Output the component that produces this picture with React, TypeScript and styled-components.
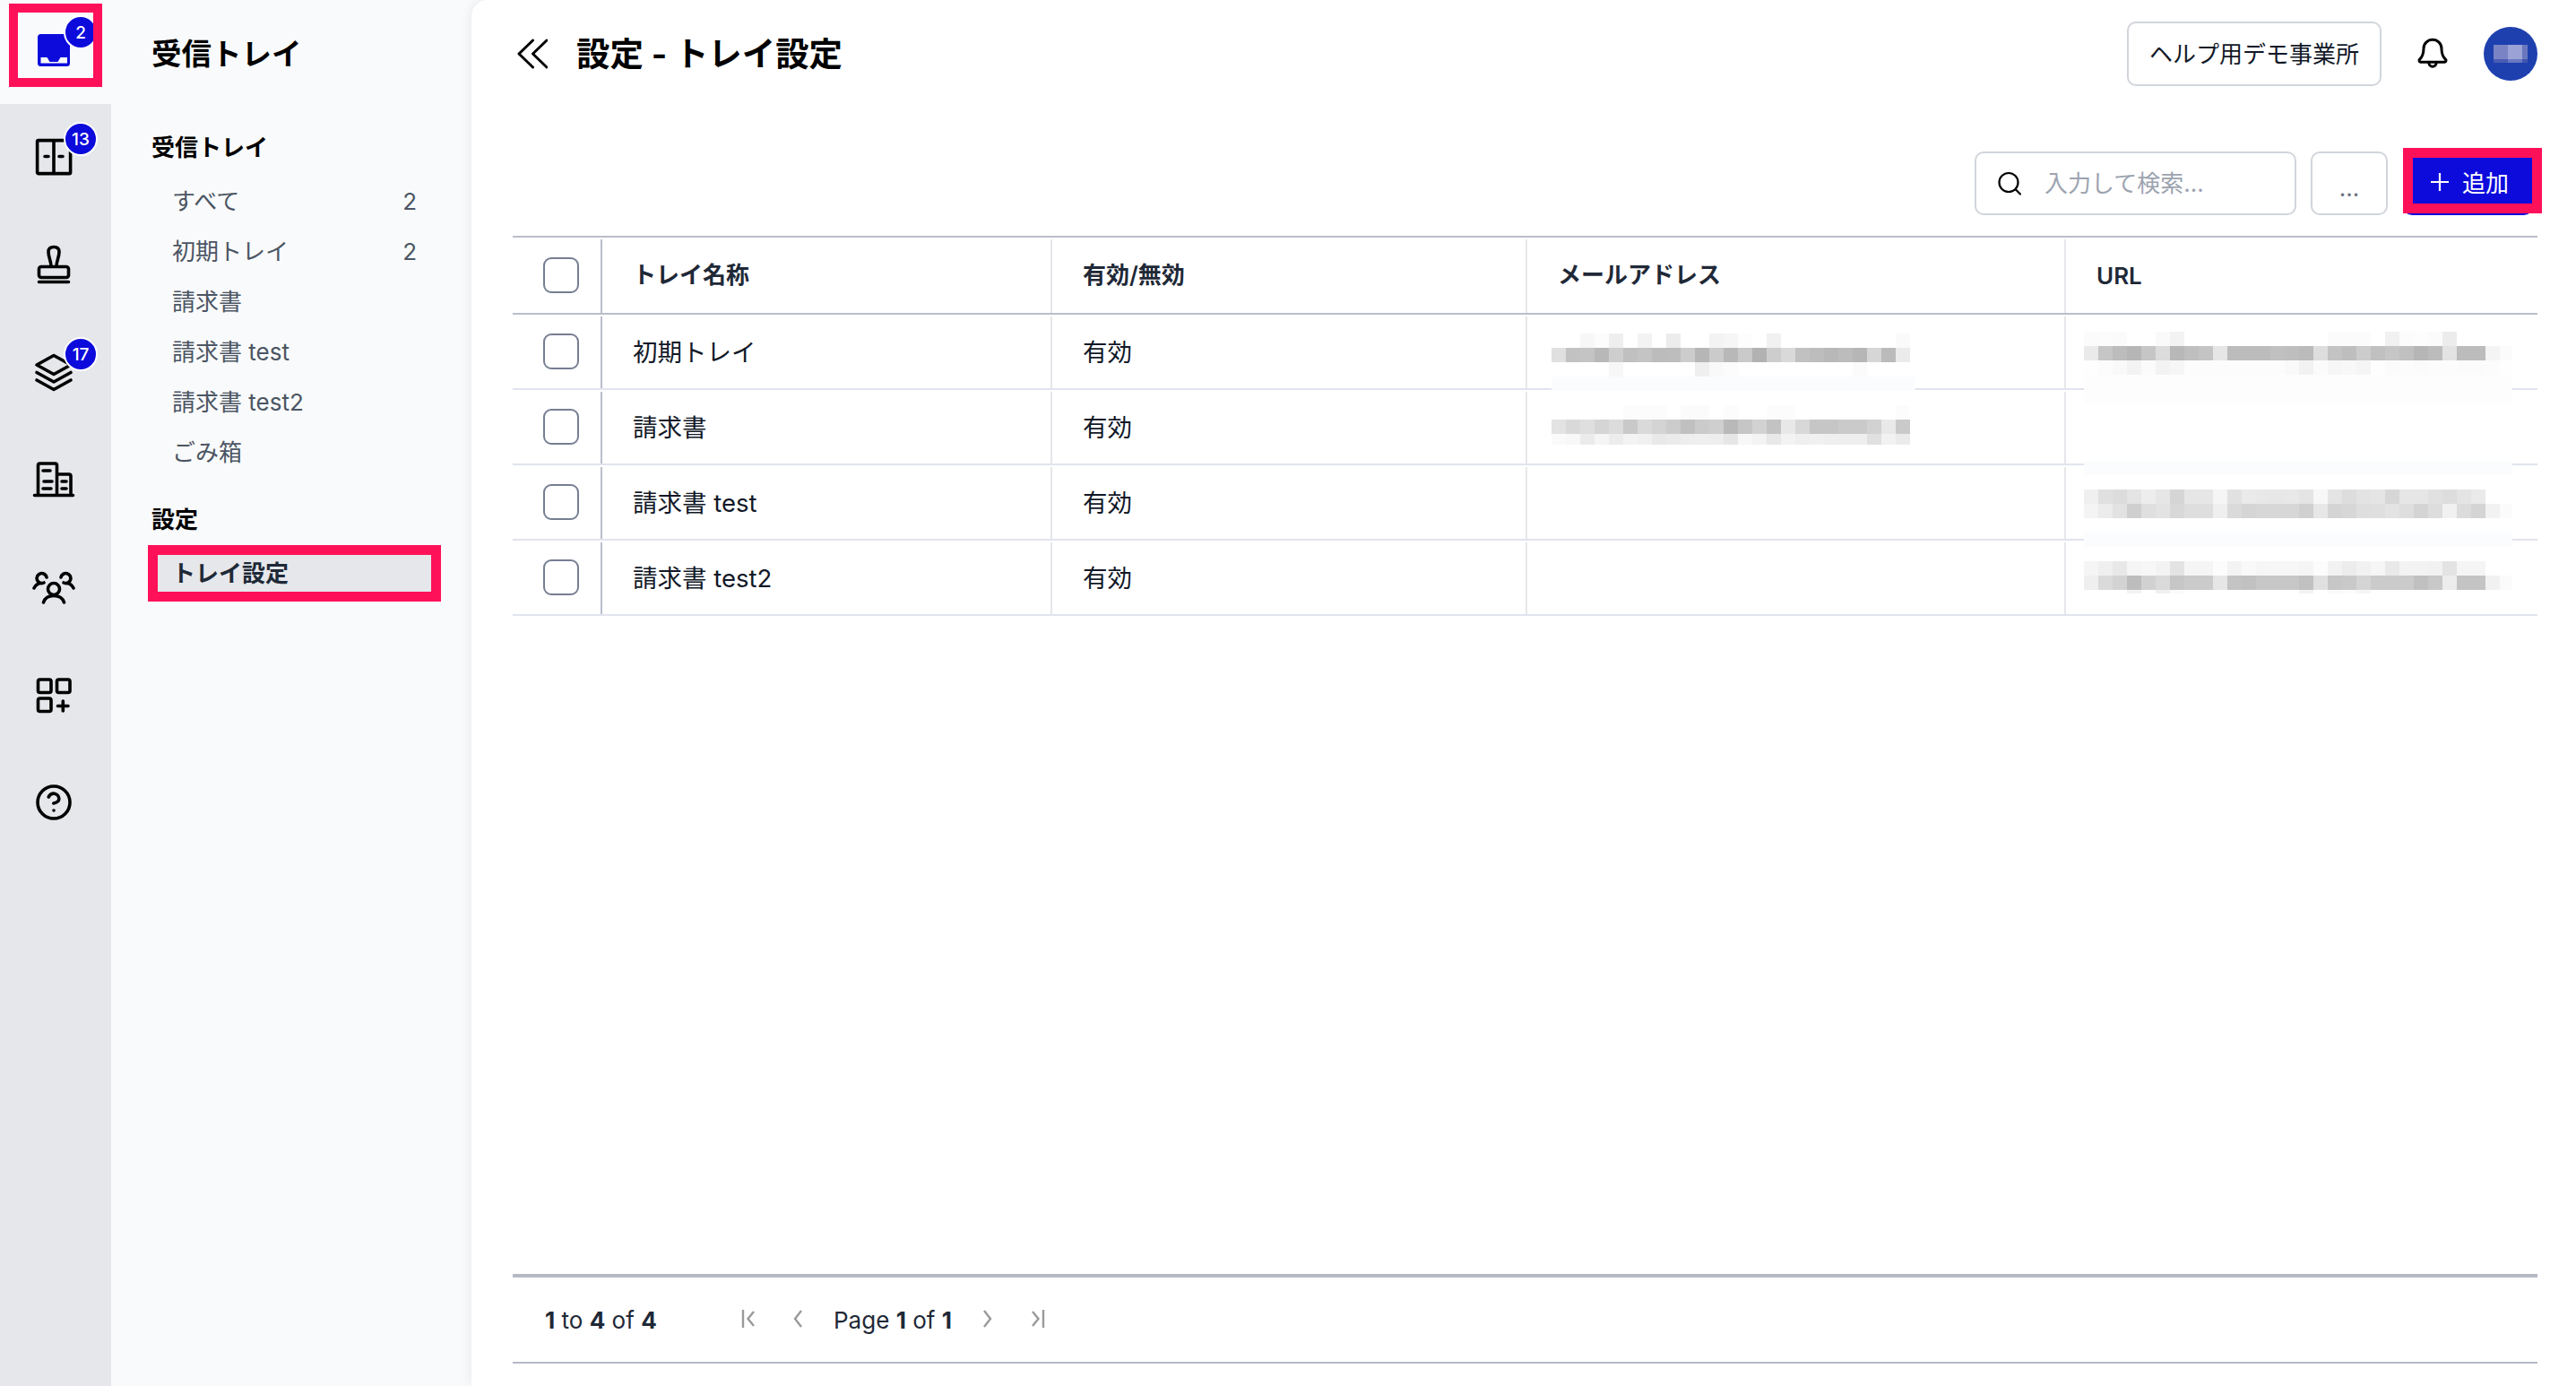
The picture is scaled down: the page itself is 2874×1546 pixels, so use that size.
import React from "react";
import styled, { createGlobalStyle } from "styled-components";

const FONT = `Inter, "Noto Sans CJK JP", sans-serif`;

const Global = createGlobalStyle`
  html, body { margin: 0; height: 100%; overflow: hidden; background: #fff; }
  #root { height: 100%; }
  *, *::before, *::after { box-sizing: border-box; }
  body { font-family: ${FONT}; color: #111827; }
`;

const Shell = styled.div`
  display: flex;
  height: 100vh;
  background: #f9fafb;
`;

/* ---------- Rail ---------- */
const Rail = styled.nav`
  width: 124px;
  flex: none;
  background: #e5e7eb;
  display: flex;
  flex-direction: column;
`;
const RailItem = styled.div<{ $active?: boolean }>`
  position: relative;
  height: ${(p) => (p.$active ? "116px" : "120px")};
  padding: ${(p) => (p.$active ? "0 4px 4px 0" : "0 4px 0 0")};
  margin-bottom: ${(p) => (p.$active ? "-1px" : "0")};
  display: flex;
  align-items: center;
  justify-content: center;
  background: ${(p) => (p.$active ? "#f9fafb" : "transparent")};
  ${(p) =>
    p.$active
      ? `&::after {
    content: "";
    position: absolute;
    left: 10px;
    top: 4px;
    width: 104px;
    height: 93px;
    border: 10.5px solid #ff1159;
  }`
      : ""}
`;
const RailIcon = styled.div`
  position: relative;
  width: 48px;
  height: 48px;
  color: #000;
  svg { display: block; }
`;
const Badge = styled.span`
  position: absolute;
  left: 35px;
  top: -15px;
  width: 38px;
  height: 38px;
  border-radius: 50%;
  border: 2px solid #fff;
  background: #0d0bdc;
  color: #fff;
  font-size: 19px;
  font-weight: 500;
  display: flex;
  align-items: center;
  justify-content: center;
`;

const Glyph = styled.svg.attrs({
  viewBox: "0 0 48 48",
  width: 48,
  height: 48,
  fill: "none",
  stroke: "currentColor",
  strokeWidth: 3.6,
  strokeLinecap: "round",
  strokeLinejoin: "round",
})``;

/* ---------- Sidebar ---------- */
const Sidebar = styled.aside`
  width: 402px;
  flex: none;
  padding-left: 45px;
  display: flex;
  flex-direction: column;
`;
const SideTitle = styled.h2`
  margin: 0;
  height: 116px;
  padding-bottom: 2px;
  display: flex;
  align-items: center;
  font-size: 33.5px;
  font-weight: 700;
  color: #000;
`;
const SideHeading = styled.h3<{ $gap: number }>`
  margin: ${(p) => p.$gap}px 0 0;
  height: 40px;
  padding-bottom: 4px;
  display: flex;
  align-items: center;
  font-size: 26px;
  font-weight: 700;
  color: #000;
`;
const NavList = styled.div<{ $gap: number }>`
  margin: ${(p) => p.$gap}px 0 0 7px;
  width: 305px;
`;
const NavItem = styled.div<{ $active?: boolean }>`
  height: ${(p) => (p.$active ? "41px" : "56px")};
  padding: 0 16px 0 16px;
  display: flex;
  align-items: center;
  justify-content: space-between;
  font-size: 26px;
  font-weight: ${(p) => (p.$active ? 700 : 400)};
  color: ${(p) => (p.$active ? "#1f2937" : "#4b5563")};
  background: ${(p) => (p.$active ? "#e5e7eb" : "transparent")};
  outline: ${(p) => (p.$active ? "11px solid #ff1159" : "none")};
  > span:first-child { margin-bottom: 4px; }
`;

/* ---------- Main ---------- */
const Main = styled.main`
  flex: 1;
  min-width: 0;
  background: #fff;
  border-top-left-radius: 18px;
  box-shadow: 0 0 14px rgba(17, 24, 39, 0.08);
  padding: 0 43px 25px 46px;
  display: flex;
  flex-direction: column;
`;
const Header = styled.header`
  height: 120px;
  flex: none;
  display: flex;
  align-items: center;
`;
const Collapse = styled.svg.attrs({
  viewBox: "0 0 34 34",
  width: 34,
  height: 34,
  fill: "none",
  stroke: "#000",
  strokeWidth: 3,
  strokeLinecap: "round",
  strokeLinejoin: "round",
})`
  flex: none;
  margin-left: 5px;
`;
const PageTitle = styled.h1`
  margin: 0 0 4px 32px;
  font-size: 37.4px;
  font-weight: 700;
  color: #000;
`;
const HeaderRight = styled.div`
  margin-left: auto;
  display: flex;
  align-items: center;
  gap: 37px;
`;
const OutlineBtn = styled.button`
  height: 72px;
  padding: 0 23px 4px;
  background: #fff;
  border: 2px solid #d1d5db;
  border-radius: 10px;
  font: 400 26px ${FONT};
  color: #111827;
  white-space: nowrap;
`;
const Avatar = styled.div`
  width: 60px;
  height: 60px;
  border-radius: 50%;
  background: #1e40af;
  display: flex;
  align-items: center;
  justify-content: center;
`;

const Toolbar = styled.div`
  flex: none;
  margin-top: 49px;
  height: 71px;
  padding-right: 5px;
  display: flex;
  justify-content: flex-end;
  gap: 16px;
`;
const SearchBox = styled.div`
  width: 359px;
  display: flex;
  align-items: center;
  padding-left: 23px;
  gap: 25px;
  border: 2px solid #d1d5db;
  border-radius: 10px;
  background: #fff;
  font-size: 26px;
  color: #9ca3af;
  > span { margin-bottom: 4px; }
`;
const MoreBtn = styled.button`
  width: 86px;
  background: #fff;
  border: 2px solid #d1d5db;
  border-radius: 10px;
  font: 400 26px ${FONT};
  color: #6b7280;
  padding-top: 10px;
`;
const AddBtn = styled.button`
  position: relative;
  width: 145px;
  margin-left: 1px;
  border: none;
  border-radius: 10px;
  background: #0d0bdc;
  color: #fff;
  font: 400 26px ${FONT};
  display: flex;
  align-items: center;
  justify-content: center;
  gap: 15px;
  padding: 0 0 4px 4px;
  &::after {
    content: "";
    position: absolute;
    left: 0;
    top: -4px;
    right: -10px;
    bottom: 2px;
    border: 11px solid #ff1159;
  }
`;

/* ---------- Table ---------- */
const Table = styled.div`
  flex: none;
  margin-top: 23px;
  border-top: 2.5px solid #bbbdcb;
`;
const Row = styled.div<{ $head?: boolean }>`
  display: grid;
  grid-template-columns: 98px 502px 530px 601px 1fr;
  height: ${(p) => (p.$head ? "85.5px" : "84px")};
  border-bottom: ${(p) => (p.$head ? "2.5px solid #bbbdcb" : "2px solid #e1e4ee")};
`;
const CheckCell = styled.div`
  padding-left: 34px;
  display: flex;
  align-items: center;
`;
const Check = styled.span`
  width: 40px;
  height: 40px;
  border: 2.5px solid #767e92;
  border-radius: 9px;
  background: #fff;
`;
const Cell = styled.div<{ $strong?: boolean; $head?: boolean; $latin?: boolean }>`
  position: relative;
  margin-top: 2px;
  padding: 0 0 ${(p) => (p.$latin ? 0 : p.$head ? 6 : 4)}px 34px;
  display: flex;
  align-items: center;
  border-left: 2px solid ${(p) => (p.$strong ? "#bbbdcb" : "#e5e7eb")};
  font-size: ${(p) => (p.$head ? "26px" : "27.5px")};
  font-weight: ${(p) => (p.$head ? 600 : 400)};
  color: ${(p) => (p.$head ? "#1f2937" : "#111827")};
`;
const MosaicSvg = styled.svg<{ $left: number; $top: number }>`
  position: absolute;
  left: ${(p) => p.$left - 2}px;
  top: ${(p) => p.$top}px;
  display: block;
`;

type Band = { h: number; v?: string; fill?: string };

function Mosaic({ left, top, width, bands }: { left: number; top: number; width: number; bands: Band[] }) {
  let y = 0;
  const rects: React.ReactNode[] = [];
  bands.forEach((b, i) => {
    if (b.fill) rects.push(<rect key={`b${i}`} x={0} y={y} width={width} height={b.h} fill={b.fill} />);
    if (b.v) {
      b.v.split(" ").forEach((c, j) => {
        if (c !== "ff") {
          rects.push(<rect key={`${i}-${j}`} x={j * 16} y={y} width={16} height={b.h} fill={`#${c}${c}${c}`} />);
        }
      });
    }
    y += b.h;
  });
  return (
    <MosaicSvg $left={left} $top={top} width={width} height={y} viewBox={`0 0 ${width} ${y}`} shapeRendering="crispEdges">
      {rects}
    </MosaicSvg>
  );
}

const EMAIL1: Band[] = [
  { h: 16, v: "ff ff f7 fc ee ff f3 ff ec ff ff f3 f6 fd ff f1 ff ff ff ff ff ff ff ff fa" },
  { h: 16, v: "e0 c2 c4 b8 ce c0 c4 bc bd cc b6 cb b8 c9 b2 cd d9 c1 bd b8 bc b6 d6 bb eb" },
  { h: 16, v: "ff ff ff ff f7 ff ff ff ff ff ef f9 fc ff ff ff ff ff ff ff ff fb ff ff ff" },
  { h: 16, fill: "#fbfcfe" },
];
const EMAIL2: Band[] = [
  { h: 16, v: "ff ff ff ff ff fc fc fc ff fb fb ff fc ff ff fc fc ff ff ff ff ff ff ff fc" },
  { h: 16, v: "e3 d9 df d5 dc c9 da d4 cc c0 cb cf b9 c6 d2 c3 e8 d8 c6 c6 ca ca d2 e9 ca" },
  { h: 12, v: "fa f8 eb f5 ec f3 f1 e9 eb ee ef ee e6 f7 f3 e8 f3 ef f1 ef ee ee e0 f2 eb" },
];
const URL1: Band[] = [
  { h: 16, v: "fb fc fb ff ff fa f3 ff ff ff ff ff ff ff ff ff ff fb fb fb ff f1 fc fd fb ec ff ff ff ff" },
  { h: 16, v: "ea c6 bc b6 c6 dc b8 bf c4 e6 bc bc bc c0 be bb de c3 be cc c0 c6 c0 b6 bc e3 bc bc f4 fb" },
  { h: 16, v: "fe fc f9 f3 fb f3 f6 fc fc fc fc fc fc fc f9 f2 fb f6 f8 f5 fe fb fc fb fc fc fb fb fc fe" },
  { h: 32, fill: "#fdfdfd" },
];
const URL3: Band[] = [
  { h: 16, fill: "#fbfcfe" },
  { h: 16 },
  { h: 16, v: "f0 e0 dc e4 ed e6 d5 e6 e6 f5 e1 ea e8 e7 e8 e4 f7 e4 dd e3 e5 d6 e6 e6 e1 dd e4 ea" },
  { h: 16, v: "f4 ec e2 cf df e3 d8 de de ef da d5 d7 d7 d7 d0 e7 d4 d7 de df e3 de d4 dd f1 dc d4 f2 fb" },
];
const URL4: Band[] = [
  { h: 16, fill: "#fbfcfe" },
  { h: 16 },
  { h: 16, v: "f5 ef e8 f5 f7 f3 e3 f5 f5 fc f3 f9 f6 f7 f7 f5 fc f2 ec f1 f6 e9 f3 f3 f1 e3 f5 f5" },
  { h: 16, v: "ef da d3 bd d1 da c6 cb cb e6 c4 c1 c7 c7 c7 c1 e0 c7 c9 d4 cb cb cb c0 c8 ec c4 c4 f1 fb" },
  { h: 4, v: "ff ff ff f3 ff f0 fa ff ff ff ff ff ff ff ff f3 ff fa fc f6" },
];

const ROWS: { name: string; email?: React.ReactNode; url?: React.ReactNode }[] = [
  {
    name: "初期トレイ",
    email: <Mosaic left={29} top={19} width={406} bands={EMAIL1} />,
    url: <Mosaic left={22} top={17} width={478} bands={URL1} />,
  },
  {
    name: "請求書",
    email: <Mosaic left={29} top={15} width={400} bands={EMAIL2} />,
  },
  { name: "請求書 test", url: <Mosaic left={22} top={-7} width={478} bands={URL3} /> },
  { name: "請求書 test2", url: <Mosaic left={22} top={-11} width={478} bands={URL4} /> },
];

/* ---------- Footer ---------- */
const Footer = styled.footer`
  margin-top: auto;
  flex: none;
  height: 100px;
  border-top: 4px solid #b6bac6;
  border-bottom: 2px solid #b6bac6;
  padding-left: 36px;
  display: flex;
  align-items: center;
  font-size: 26px;
  color: #1f2937;
  b { font-weight: 700; }
`;
const Summary = styled.span`
  width: 218px;
  white-space: nowrap;
`;
const PagerIcon = styled.svg.attrs({
  viewBox: "0 0 24 24",
  width: 24,
  height: 24,
  fill: "none",
  stroke: "#9a9a9a",
  strokeWidth: 2.4,
})`
  flex: none;
  margin-bottom: 2px;
`;
const PageText = styled.span`
  margin: 0 28px 0 28px;
  white-space: nowrap;
`;
const IconGap = styled.span<{ $w: number }>`
  width: ${(p) => p.$w}px;
  flex: none;
`;

const SearchSvg = styled.svg.attrs({
  viewBox: "0 0 28 28",
  width: 28,
  height: 28,
  fill: "none",
  stroke: "#000",
  strokeWidth: 2.2,
  strokeLinecap: "round",
})`
  flex: none;
`;

export default function App() {
  return (
    <Shell>
      <Global />
      <Rail>
        <RailItem $active>
          <RailIcon>
            <svg viewBox="0 0 48 48" width="48" height="48">
              <rect x="6" y="6" width="36" height="36" rx="3.5" fill="#0d0bdc" />
              <path d="M9.500 32h7l3 5h9l3-5H39v6.500H9.500z" fill="#f9fafb" />
            </svg>
            <Badge>2</Badge>
          </RailIcon>
        </RailItem>
        <RailItem>
          <RailIcon>
            <Glyph>
              <rect x="5.600" y="5.600" width="37" height="37" rx="1" />
              <path d="M24 6v36M14 23.500h4M30 23.500h4" />
            </Glyph>
            <Badge>13</Badge>
          </RailIcon>
        </RailItem>
        <RailItem>
          <RailIcon>
            <Glyph>
              <rect x="7.500" y="26.500" width="33" height="12" rx="2.500" />
              <path d="M7.500 43.500h33M21 26C21 20 18 16 18 10c0-4 2.500-5.500 6-5.500S30 6 30 10c0 6-3 10-3 16" />
            </Glyph>
          </RailIcon>
        </RailItem>
        <RailItem>
          <RailIcon>
            <Glyph>
              <path d="M24 5.500 43 16 24 26.500 5 16zM5 24.500 24 35l19-10.500M5 33l19 10.500L43 33" />
            </Glyph>
            <Badge>17</Badge>
          </RailIcon>
        </RailItem>
        <RailItem>
          <RailIcon>
            <Glyph>
              <path d="M2.500 41.500h43M6.500 41V8a2 2 0 0 1 2-2h17a2 2 0 0 1 2 2v33M28 18h13a2 2 0 0 1 2 2v21M12 14h8M13 26h9M12 34h9M33 26h5M33 34h5" />
            </Glyph>
          </RailIcon>
        </RailItem>
        <RailItem>
          <RailIcon>
            <Glyph>
              <circle cx="24" cy="26" r="6.500" />
              <path d="M12.500 41c1.500-5 5.500-7.500 11.500-7.500s10 2.500 11.500 7.500" />
              <path d="M13 19a5.500 5.500 0 1 1 3-6" />
              <path d="M35 19a5.500 5.500 0 1 0-3-6" />
              <path d="M2 25c1.500-3 4-5 7-5.500M46 25c-1.500-3-4-5-7-5.500" />
            </Glyph>
          </RailIcon>
        </RailItem>
        <RailItem>
          <RailIcon>
            <Glyph>
              <rect x="6.500" y="7" width="14.500" height="14.500" rx="2" />
              <rect x="27.500" y="7" width="14.500" height="14.500" rx="2" />
              <rect x="6.500" y="28" width="14.500" height="14.500" rx="2" />
              <path d="M28.500 36.500H40M34.300 31v11" />
            </Glyph>
          </RailIcon>
        </RailItem>
        <RailItem>
          <RailIcon>
            <Glyph>
              <circle cx="24" cy="24" r="18" />
              <path d="M18.200 18a6 6 0 0 1 11.600 2c0 4-6 5-6 5M24 33h.02" />
            </Glyph>
          </RailIcon>
        </RailItem>
      </Rail>

      <Sidebar>
        <SideTitle>受信トレイ</SideTitle>
        <SideHeading $gap={28}>受信トレイ</SideHeading>
        <NavList $gap={12}>
          <NavItem><span>すべて</span><span>2</span></NavItem>
          <NavItem><span>初期トレイ</span><span>2</span></NavItem>
          <NavItem><span>請求書</span></NavItem>
          <NavItem><span>請求書 test</span></NavItem>
          <NavItem><span>請求書 test2</span></NavItem>
          <NavItem><span>ごみ箱</span></NavItem>
        </NavList>
        <SideHeading $gap={27}>設定</SideHeading>
        <NavList $gap={20}>
          <NavItem $active><span>トレイ設定</span></NavItem>
        </NavList>
      </Sidebar>

      <Main>
        <Header>
          <Collapse>
            <path d="M17.500 2 2 17l15.500 15M33 2 17.500 17 33 32" />
          </Collapse>
          <PageTitle>設定 - トレイ設定</PageTitle>
          <HeaderRight>
            <OutlineBtn>ヘルプ用デモ事業所</OutlineBtn>
            <svg viewBox="0 0 24 24" width="40" height="40" fill="none" stroke="#000" strokeWidth="1.8" strokeLinecap="round" strokeLinejoin="round">
              <path d="M9.500 17.500v.5a2.500 2.500 0 0 0 5 0v-.5" />
              <path d="M3.262 15.826A1 1 0 0 0 4 17.500h16a1 1 0 0 0 .74-1.673C19.410 14.456 18 12.999 18 8.500a6 6 0 0 0-12 0c0 4.499-1.411 5.956-2.738 7.326" />
            </svg>
            <Avatar>
              <svg width="38" height="20" viewBox="0 0 38 20" shapeRendering="crispEdges">
                <rect x="0" y="0" width="16" height="16" fill="#7a83c4" />
                <rect x="16" y="0" width="16" height="16" fill="#9ba2d6" />
                <rect x="32" y="0" width="6" height="16" fill="#6a77bf" />
                <rect x="0" y="16" width="16" height="4" fill="#4a5cb3" />
                <rect x="16" y="16" width="16" height="4" fill="#6a78c2" />
                <rect x="32" y="16" width="6" height="4" fill="#3f55b0" />
              </svg>
            </Avatar>
          </HeaderRight>
        </Header>

        <Toolbar>
          <SearchBox>
            <SearchSvg>
              <circle cx="13" cy="12.500" r="10.500" />
              <path d="M21 20.500l5 5" />
            </SearchSvg>
            <span>入力して検索...</span>
          </SearchBox>
          <MoreBtn>...</MoreBtn>
          <AddBtn>
            <svg viewBox="0 0 20 20" width="20" height="20" stroke="#fff" strokeWidth="2.200" fill="none">
              <path d="M10 0v20M0 10h20" />
            </svg>
            <span>追加</span>
          </AddBtn>
        </Toolbar>

        <Table>
          <Row $head>
            <CheckCell><Check /></CheckCell>
            <Cell $head $strong>トレイ名称</Cell>
            <Cell $head>有効/無効</Cell>
            <Cell $head>メールアドレス</Cell>
            <Cell $head $latin>URL</Cell>
          </Row>
          {ROWS.map((r) => (
            <Row key={r.name}>
              <CheckCell><Check /></CheckCell>
              <Cell $strong>{r.name}</Cell>
              <Cell>有効</Cell>
              <Cell>{r.email}</Cell>
              <Cell>{r.url}</Cell>
            </Row>
          ))}
        </Table>

        <Footer>
          <Summary><b>1</b> to <b>4</b> of <b>4</b></Summary>
          <PagerIcon><path d="M3 2v20M15 4l-6.500 8 6.500 8" /></PagerIcon>
          <IconGap $w={28} />
          <PagerIcon><path d="M16 3l-7 9 7 9" /></PagerIcon>
          <PageText>Page <b>1</b> of <b>1</b></PageText>
          <PagerIcon><path d="M8 3l7 9-7 9" /></PagerIcon>
          <IconGap $w={29} />
          <PagerIcon><path d="M21 2v20M9 4l6.500 8L9 20" /></PagerIcon>
        </Footer>
      </Main>
    </Shell>
  );
}
